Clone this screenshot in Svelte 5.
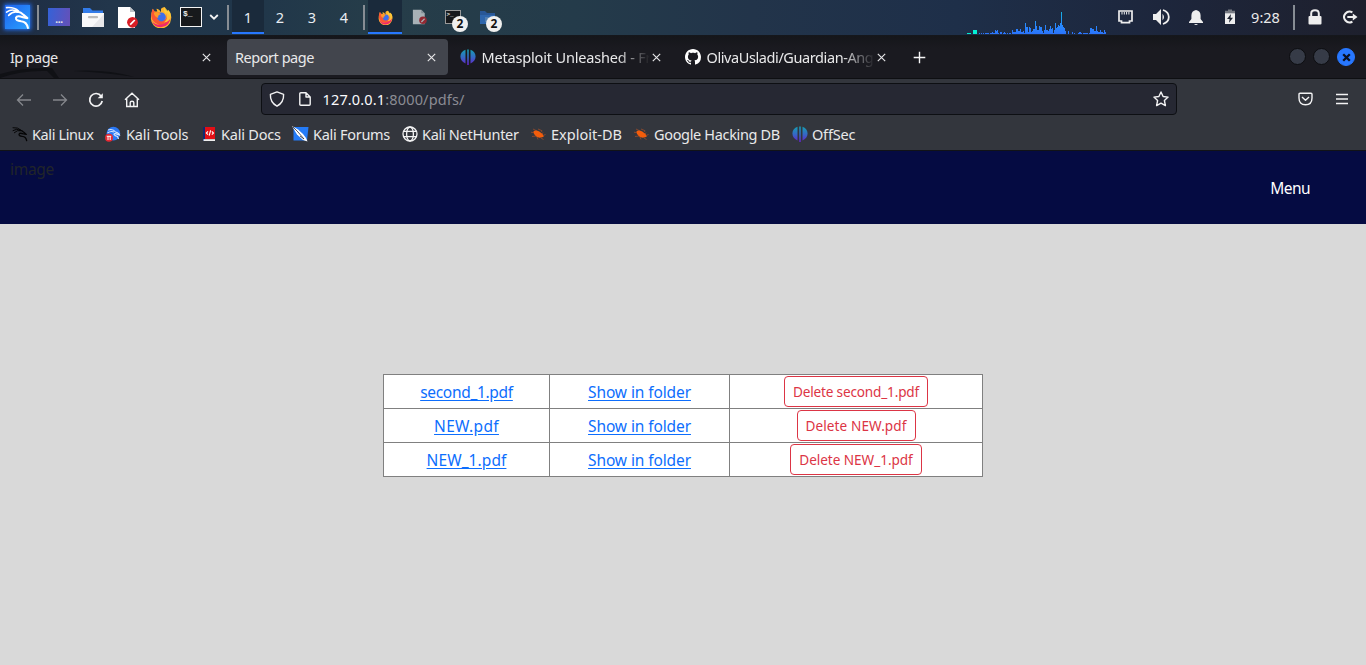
<script>
  const workspaces = [1, 2, 3, 4];
  const tabs = [
    { title: 'Ip page', width: 227, ls: -0.6 },
    { title: 'Report page', width: 221, ls: -0.46, active: true },
    { title: 'Metasploit Unleashed - Fr', width: 225, icon: 'offsec', ls: -0.17 },
    { title: 'OlivaUsladi/Guardian-Ang', width: 225, icon: 'github', ls: -0.41 }
  ];
  const bookmarks = [
    { label: 'Kali Linux', width: 93, icon: 'dragon', ls: -0.38, gap: 4 },
    { label: 'Kali Tools', width: 97, icon: 'tools', ls: -0.12, gap: 5 },
    { label: 'Kali Docs', width: 90, icon: 'docs', ls: -0.2, gap: 3 },
    { label: 'Kali Forums', width: 110, icon: 'forums', ls: -0.28, gap: 4 },
    { label: 'Kali NetHunter', width: 128, icon: 'globe', ls: -0.3, gap: 4 },
    { label: 'Exploit-DB', width: 103, icon: 'bug', ls: 0.02, gap: 5 },
    { label: 'Google Hacking DB', width: 159, icon: 'bug', ls: -0.34, gap: 5 },
    { label: 'OffSec', width: 70, icon: 'offsec', ls: -0.2, gap: 4 }
  ];
  const files = [
    { name: 'second_1.pdf', ls: -0.31, dls: -0.18, bw: 144 },
    { name: 'NEW.pdf', ls: 0.33, dls: 0.1, bw: 119 },
    { name: 'NEW_1.pdf', ls: 0.08, dls: -0.05, bw: 132 }
  ];
  const load = [
    1,0,1,0,1,0,1,1,1,1,0,1,1,2,1,1,4,3,4,1,0,2,2,0,1,2,1,0,1,0,1,1,0,4,2,2,2,5,5,3,3,5,2,2,3,1,11,7,7,2,7,6,2,3,5,5,13,8,4,4,8,7,7,3,1,4,9,4,4,3,5,8,5,6,1,4,
    11,6,7,9,8,11,22,9,7,6,3,0,0,3,0,0,0,2,0,1,0,0,0,1,2,2,1,0,1,1,1,1,1,0,1,6,6,5,5,3,3,8,3,2,2,4,2,2,1,4,2,0
  ];
</script>

{#snippet dragon(color, size)}
  <svg width={size} height={size} viewBox="0 0 24 24" fill="none" stroke={color} stroke-linecap="round" stroke-linejoin="round">
    <path d="M1.5 2.5Q9 1.8 13 5.8M1.5 6.8Q7 3 12.5 6.5M3.5 10Q8 5.5 12.5 7" stroke-width="1.5" />
    <path d="M11.5 6.3Q15.5 6.8 17.8 9.5L21.5 12.6L17.2 11.8Q11.5 9.8 10.6 12.2Q10 15 15.5 15.6Q20.8 16 22 22" stroke-width="2" />
  </svg>
{/snippet}

{#snippet firefox()}
  <svg class="ff" viewBox="0 0 24 24">
    <path d="M12 3Q14 1 16 1Q16 4 19 6L20 4Q24 9 23 14A11 11 0 0 1 1 13Q1 8 3 3L5 6L8 6L7 3Q10 3 12 7Z" fill="#ffb52d" />
    <path d="M1.3 10Q2 5 3 3L6 7L11 7Q8 9 9 13Q11 17 16 15Q20 12 17 6Q23 9 22 15A11 11 0 0 1 1.3 10Z" fill="#fa5535" />
    <path d="M2 16Q6 22 14 20Q20 18 22 13Q22 21 13 23Q5 24 2 16Z" fill="#ee276e" />
    <circle cx="12.5" cy="12" r="4.8" fill="#3f6ee9" />
    <path d="M4 7Q9 6 12 9Q8 10 9 13Q5 12 4 7Z" fill="#ff9b29" />
    <path d="M16 1Q14 6 18 9Q20 14 15 18Q23 17 22.8 10Q22 5 19 5Z" fill="#ffd13a" opacity=".85" />
  </svg>
{/snippet}

{#snippet textfile()}
  <svg class="tf" viewBox="0 0 21 23">
    <path d="M1 1H13L18 6V22H1Z" fill="#fff" /><path d="M13 1L18 6H13Z" fill="#bfc3c8" />
    <circle cx="15.5" cy="16.3" r="5.4" fill="#d91d25" /><path d="M13.2 18.7L17.8 14" stroke="#fff" stroke-width="1.7" />
  </svg>
{/snippet}

{#snippet mark(name)}
  {#if name === 'offsec'}
    <svg width="16" height="16" viewBox="0 0 16 16">
      <defs><linearGradient id="os" x2="0" y2="1"><stop offset="0" stop-color="#159fb2" /><stop offset=".5" stop-color="#3569c5" /><stop offset="1" stop-color="#6520c8" /></linearGradient></defs>
      <path d="M5.5 .8V14.5C2.5 13 .4 10.8 .4 7.5C.4 4.2 2.5 1.7 5.5 .8ZM7.2 .5H8.8V16H7.2ZM10.5 .8C13.5 1.7 15.6 4.2 15.6 7.5C15.6 10.8 13.5 13 10.5 14.5Z" fill="url(#os)" />
    </svg>
  {:else if name === 'github'}
    <svg width="16" height="16" viewBox="0 0 16 16"><path fill="#fff" d="M8 0C3.58 0 0 3.58 0 8c0 3.54 2.29 6.53 5.47 7.59.4.07.55-.17.55-.38 0-.19-.01-.82-.01-1.49-2.01.37-2.53-.49-2.69-.94-.09-.23-.48-.94-.82-1.13-.28-.15-.68-.52-.01-.53.63-.01 1.08.58 1.23.82.72 1.21 1.87.87 2.33.66.07-.52.28-.87.51-1.07-1.78-.2-3.64-.89-3.64-3.95 0-.87.31-1.59.82-2.15-.08-.2-.36-1.02.08-2.12 0 0 .67-.21 2.2.82.64-.18 1.32-.27 2-.27s1.36.09 2 .27c1.53-1.04 2.2-.82 2.2-.82.44 1.1.16 1.92.08 2.12.51.56.82 1.27.82 2.15 0 3.07-1.87 3.75-3.65 3.95.29.25.54.73.54 1.48 0 1.07-.01 1.93-.01 2.2 0 .21.15.46.55.38A8.01 8.01 0 0 0 16 8c0-4.42-3.58-8-8-8" /></svg>
  {:else if name === 'dragon'}
    {@render dragon('#050506', 16)}
  {:else if name === 'tools'}
    <svg width="16" height="16" viewBox="0 0 16 16">
      <circle cx="8.4" cy="7.6" r="6.8" fill="#2a78f5" />
      <path d="M3 4Q8 2.5 10.5 6Q14 7 14.5 9Q9 6.5 9 8.5Q10 10 12.5 10.5L13.5 13M2.5 7Q6 4.5 9 6" fill="none" stroke="#d8e7ff" stroke-width="1.1" />
      <circle cx="4" cy="11.8" r="4" fill="#e52933" /><path d="M1.8 10.3H6.2M3 10.5V14M5.2 10.5V14" stroke="#fff" stroke-width="1" />
    </svg>
  {:else if name === 'docs'}
    <svg width="16" height="16" viewBox="0 0 16 16">
      <path d="M2 1H13V13H2Z" fill="#e20f16" /><path d="M1 1H3V15H1Z" fill="#102a72" /><path d="M1.5 13.2H13V15H1.5Z" fill="#eee" />
      <path d="M6 5.3L4.3 7L6 8.7M9.8 5.3L11.5 7L9.8 8.7M8.6 4.3L7.2 9.7" fill="none" stroke="#fff" stroke-width="1.1" />
    </svg>
  {:else if name === 'forums'}
    <svg width="17" height="16" viewBox="0 0 17 16">
      <path d="M1.5 1H16.5L15 14.5H1.5Z" fill="#247bf7" /><path d="M0 0L6 3.5L11 8L14 12L15.5 15.5L11 14L5 8.5Z" fill="#fff" />
      <path d="M1 1L6 6L12 13M8 10L12 13" stroke="#30343d" stroke-width=".8" fill="none" />
    </svg>
  {:else if name === 'globe'}
    <svg width="16" height="16" viewBox="0 0 16 16" fill="none" stroke="#f3f3f4" stroke-width="1.3"><circle cx="8" cy="8" r="7" /><ellipse cx="8" cy="8" rx="3.4" ry="7" /><path d="M1.7 5.3H14.3M1.7 10.7H14.3" /></svg>
  {:else if name === 'bug'}
    <svg width="16" height="16" viewBox="0 0 16 16">
      <path d="M1 6.2L5 7M3 3L7 5M2 10.5L6 10M8 3L12 4.7L11.5 6M13 6.5L12 8M13 9.5L15.5 8.5M11 12L13.5 13.5M7 11L8 13.5" fill="none" stroke="#8f4a2c" stroke-width=".9" />
      <path d="M3.4 5.4Q5.5 3.8 9.3 5.5Q12.8 7.3 13.8 10.8L12 11.3Q9 12.4 6.2 10.6Q3.6 8.8 3.4 5.4Z" fill="#f45d0b" />
    </svg>
  {/if}
{/snippet}

<header class="panel">
  <div class="cell kali"><span class="logo">{@render dragon('#fff', 25)}</span></div>
  <div class="cell sep"><i></i></div>
  <div class="cell launcher"><span class="desktop">...</span></div>
  <div class="cell launcher">
    <svg width="22" height="20" viewBox="0 0 22 20"><path d="M1 1H8L10.5 3.5H21V8H1Z" fill="#327be9" /><path d="M0 6H22V20H0Z" fill="#f8f8f9" /><path d="M22 7V20H10Z" fill="#e7e7ea" /><path d="M7 10.2H15" stroke="#bbb" stroke-width="2.2" stroke-linecap="round" /></svg>
  </div>
  <div class="cell launcher doc">{@render textfile()}</div>
  <div class="cell launcher">{@render firefox()}</div>
  <div class="cell term"><span class="terminal">$_</span></div>
  <div class="cell chev"><svg width="10" height="8" viewBox="0 0 10 8"><path d="M1.2 2L5 5.7L8.8 2" fill="none" stroke="#f3f3f3" stroke-width="1.8" /></svg></div>
  <div class="cell sep"><i></i></div>
  {#each workspaces as n}
    <div class="cell ws" class:on={n === 1}>{n}</div>
  {/each}
  <div class="cell sep"><i></i></div>
  <div class="cell launcher on small">{@render firefox()}</div>
  <div class="cell launcher small dim">{@render textfile()}</div>
  <div class="cell launcher"><span class="terminal mini">&gt;_</span><b class="badge">2</b></div>
  <div class="cell launcher">
    <svg width="15" height="13" viewBox="0 0 15 13"><path d="M0 0H5L7 2H15V13H0Z" fill="#285796" /><path d="M0 4H15V13H0Z" fill="#2e66ac" /><path d="M5 6H10V11H5Z" fill="#517eaf" /></svg>
    <b class="badge">2</b>
  </div>
  <div class="grow"></div>
  <svg class="graph" width="141" height="24" viewBox="0 0 141 24" shape-rendering="crispEdges">
    <defs><linearGradient id="gr" x2="0" y2="24" gradientUnits="userSpaceOnUse"><stop offset="0" stop-color="#12b8e0" /><stop offset=".6" stop-color="#278cff" /><stop offset="1" stop-color="#2b73fa" /></linearGradient></defs>
    <rect x="0" y="23" width="4" height="1" fill="#04ecd0" /><rect x="6" y="20" width="4" height="4" fill="#04f1d6" />
    {#each load as h, i}<rect x={12 + i} y={24 - h} width="1" height={h} fill="url(#gr)" />{/each}
  </svg>
  <div class="cell tray"><svg width="15" height="14" viewBox="0 0 15 14"><path d="M1 1H14V11H11.5V12.7H3.5V11H1Z" fill="none" stroke="#eee" stroke-width="1.7" /><path d="M4 2V4.5M6.3 2V4.5M8.6 2V4.5M10.9 2V4.5" stroke="#eee" stroke-width="1" /></svg></div>
  <div class="cell tray"><svg width="18" height="18" viewBox="0 0 18 18"><path d="M1 6H4L9 1V17L4 12H1Z" fill="#eee" /><path d="M10.5 5.7Q13.5 9 10.5 12.3" fill="#eee" /><path d="M11 2Q16.8 4 16.8 9Q16.8 14 11 16" fill="none" stroke="#eee" stroke-width="1.8" /></svg></div>
  <div class="cell tray"><svg width="16" height="17" viewBox="0 0 16 17"><path d="M8 1Q12.6 1.8 12.6 6.5V10L15 13V14H1V13L3.4 10V6.5Q3.4 1.8 8 1ZM6 15H10Q8 17 6 15Z" fill="#eee" /></svg></div>
  <div class="cell tray bat"><svg width="12" height="16" viewBox="0 0 12 16"><path d="M1 3V1.8H4V.5H8V1.8H11V4.2H1Z" fill="#777b83" /><path d="M1 4.2H11V15H1Z" fill="#eee" /><path d="M7 5L3 10H5.6L5 13.7L9 8.7H6.5Z" fill="#1e2432" /></svg></div>
  <div class="cell clock">9:28</div>
  <div class="cell sep"><i></i></div>
  <div class="cell launcher"><svg width="14" height="16" viewBox="0 0 14 16"><path d="M3.2 7V4.5Q3.2 1.2 7 1.2Q10.8 1.2 10.8 4.5V7" fill="none" stroke="#eee" stroke-width="2" /><rect x=".5" y="7" width="13" height="8.5" rx="1" fill="#eee" /></svg></div>
  <div class="cell launcher exit"><svg width="16" height="14" viewBox="0 0 16 14"><path d="M10.4 2.4A5.4 5.4 0 1 0 10.4 11.6" fill="none" stroke="#eee" stroke-width="2" /><path d="M5.3 6H10.8V3.4L15.5 7L10.8 10.6V8H5.3Z" fill="#eee" /></svg></div>
</header>

<nav class="tabs">
  <svg class="trace" width="140" height="13" viewBox="0 0 140 13"><path d="M0 9Q22 2 52 3L59 13H54L47 6Q22 5 0 13Z" fill="#101115" /><path d="M73 6Q105 4 135 12Q100 7 73 6Z" fill="#101115" /></svg>
  {#each tabs as t, i}
    <div style:width="{t.width}px">
      <div class="tab" class:active={t.active} class:withicon={t.icon} class:first={i === 0}>
        {#if t.icon}{@render mark(t.icon)}{/if}
        <span class="title" class:fade={t.icon} style:letter-spacing="{t.ls}px">{t.title}</span>
        <svg width="9" height="9" viewBox="0 0 9 9"><path d="M.8 .8L8.2 8.2M8.2 .8L.8 8.2" stroke="#e6e6e8" stroke-width="1.15" /></svg>
      </div>
    </div>
  {/each}
  <svg class="plus" width="13" height="13" viewBox="0 0 13 13"><path d="M6.5 .7V12.3M.7 6.5H12.3" stroke="#f5f5f6" stroke-width="1.4" /></svg>
  <div class="grow"></div>
  <div class="win"><i></i><i></i><i class="close"><svg width="9" height="9" viewBox="0 0 9 9"><path d="M1.2 1.2L7.8 7.8M7.8 1.2L1.2 7.8" stroke="#0b1020" stroke-width="2.3" /></svg></i></div>
</nav>

<section class="chrome">
  <div class="toolbar">
    <div class="nav">
      <svg viewBox="0 0 16 16" class="off"><path d="M15 8H1.5M7 2.5L1.5 8L7 13.5" /></svg>
      <svg viewBox="0 0 16 16" class="off"><path d="M1 8H14.5M9 2.5L14.5 8L9 13.5" /></svg>
      <svg viewBox="0 0 16 16"><path d="M13.2 4.2A6.3 6.3 0 1 0 14.2 9" stroke-width="1.7" /><path d="M14.8 1.2V6.3H9.7Z" fill="#f3f3f4" stroke="none" /></svg>
      <svg viewBox="0 0 16 16"><path d="M1 7.7L8 1.2L15 7.7M2.7 6.8V14.5H13.3V6.8M6.2 14.2V10.5Q6.2 9.3 8 9.3Q9.8 9.3 9.8 10.5V14.2" stroke-width="1.4" /></svg>
    </div>
    <div class="url">
      <svg width="16" height="16" viewBox="0 0 16 16"><path d="M8 .9L14.6 3.3Q15 11.5 8 15.2Q1 11.5 1.4 3.3Z" /></svg>
      <svg class="page" width="12" height="14" viewBox="0 0 12 14"><path d="M.8 1.8Q.8 .8 1.8 .8H7L11.2 5V12.2Q11.2 13.2 10.2 13.2H1.8Q.8 13.2 .8 12.2ZM7 .8V5H11.2" /></svg>
      <span class="addr">127.0.0.1<em>:8000/pdfs/</em></span>
      <svg width="16" height="16" viewBox="0 0 16 16"><path d="M8 1L10.1 5.5L15.1 6.1L11.4 9.5L12.4 14.6L8 12.1L3.6 14.6L4.6 9.5L.9 6.1L5.9 5.5Z" /></svg>
    </div>
    <div class="end">
      <svg width="15" height="14" viewBox="0 0 15 14"><path d="M2 1.2H13Q14 1.2 14 2.2V6Q14 12.7 7.5 12.7Q1 12.7 1 6V2.2Q1 1.2 2 1.2ZM4 5L7.5 8.3L11 5" /></svg>
      <svg width="12" height="12" viewBox="0 0 12 12"><path d="M0 1.5H12M0 6H12M0 10.5H12" /></svg>
    </div>
  </div>
  <div class="bookmarks">
    {#each bookmarks as b}
      <div class="bm" style:width="{b.width}px" style:gap="{b.gap}px" style:letter-spacing="{b.ls}px">{@render mark(b.icon)}<span>{b.label}</span></div>
    {/each}
  </div>
</section>

<main>
  <div class="bar">
    <span class="image">image</span>
    <span class="menu">Menu</span>
  </div>
  <table>
    <colgroup><col style="width:166px" /><col style="width:180px" /><col style="width:253px" /></colgroup>
    <tbody>
      {#each files as f}
        <tr>
          <td><a href="#file" style:letter-spacing="{f.ls}px">{f.name}</a></td>
          <td><a href="#folder">Show in folder</a></td>
          <td><button style:letter-spacing="{f.dls}px" style:width="{f.bw}px">Delete {f.name}</button></td>
        </tr>
      {/each}
    </tbody>
  </table>
</main>

<style>
  :global(body) { margin: 0; background: #d9d9d9; overflow: hidden; }
  :global(#app) { font: 14.5px "Noto Sans", sans-serif; color: #e9e9ea; }
  * { box-sizing: border-box; }
  svg { display: block; flex: none; }
  .grow { flex: 1; }

  .panel { display: flex; height: 36px; padding-bottom: 1px; background: linear-gradient(90deg, #1e2c43 0, #22364b 8%, #20364a 18%, #263d49 28%, #243b4a 42%, #22344a 55%, #1e2f49 70%, #1d263c 85%, #1e202d 100%); border-bottom: 1px solid #15171c; }
  .cell { position: relative; display: flex; align-items: center; justify-content: center; flex: none; height: 34px; }
  .kali { width: 34px; padding-bottom: 1px; }
  .logo { display: grid; width: 25px; height: 24px; background: linear-gradient(135deg, #1e62ee, #2ba2ff); box-shadow: 0 0 4px 1px #216cef; }
  .sep { width: 8px; }
  .sep i { width: 2px; height: 25px; background: #878d94; }
  .launcher { width: 34px; }
  .desktop { width: 22px; height: 18px; background: linear-gradient(100deg, #3462d8, #6650b8); font: bold 10px/23px "Noto Sans", sans-serif; text-align: center; letter-spacing: -.3px; }
  .ff { width: 22px; height: 22px; }
  .tf { width: 21px; height: 23px; }
  .term { width: 26px; }
  .terminal { width: 22px; height: 20px; background: #17191c; border: 1px solid #f5f5f5; font: bold 8px/11px "Liberation Mono", monospace; padding-left: 2px; }
  .mini { width: 16px; height: 14px; margin-right: 1px; border-color: #999; font-size: 6px; line-height: 8px; padding-left: 1px; }
  .chev { width: 20px; }
  .ws { width: 32px; color: #e8edf2; padding-bottom: 1px; }
  .on::after { content: ""; position: absolute; inset: auto 0 0; height: 2px; background: #2777ff; }
  .on { background: #1a2a3b; }
  .small .ff { width: 15px; height: 15px; }
  .small .tf { width: 15px; height: 16px; }
  .dim { opacity: .6; }
  .badge { position: absolute; left: 16px; top: 16px; width: 16px; height: 16px; border-radius: 50%; background: #f0f0ef; color: #111; font: bold 12px/16px "Noto Sans", sans-serif; text-align: center; }
  .graph { margin-top: 10px; }
  .tray { width: 35px; }
  .bat { width: 34px; }
  .clock { width: 43px; padding: 0 6px 1px 0; }
  .exit { justify-content: flex-end; padding-right: 8px; }

  .tabs { position: relative; display: flex; align-items: center; height: 43px; background: linear-gradient(#15161a, #1a1a20 30%); border-bottom: 1px solid #0e0f12; }
  .trace { position: absolute; left: 0; bottom: 0; }
  .tab { position: relative; display: flex; align-items: center; height: 36px; padding: 0 12px 0 8px; border-radius: 4px; }
  .first { padding-left: 10px; padding-right: 16px; }
  .active { background: #42454d; }
  .withicon { padding: 0 12px 0 12px; gap: 6px; }
  .title { flex: 1; white-space: nowrap; line-height: 24px; }
  .fade { margin: 0 -5px 0 -.5px; -webkit-mask-image: linear-gradient(90deg, #000 calc(100% - 34px), transparent calc(100% - 1px)); mask-image: linear-gradient(90deg, #000 calc(100% - 34px), transparent calc(100% - 1px)); }
  .plus { margin-left: 15px; }
  .win { display: flex; gap: 7px; padding-right: 11px; }
  .win i { display: grid; place-items: center; width: 17px; height: 17px; border-radius: 50%; background: #363b47; border: 1px solid #0c0d10; }
  .win .close { background: #2777ff; border-color: #2777ff; width: 18px; height: 18px; }

  .chrome { height: 72px; background: #33363d; border-bottom: 1px solid #111317; }
  .toolbar { display: flex; align-items: center; height: 40px; padding-right: 18px; }
  .nav { display: flex; gap: 20px; width: 261px; padding: 1px 0 0 16px; }
  .nav svg { width: 16px; height: 16px; fill: none; stroke: #f3f3f4; stroke-width: 1.3; }
  .nav svg:last-child { margin-left: -.5px; }
  .nav .off { stroke: #85878c; }
  .url { display: flex; align-items: center; width: 916px; height: 32px; padding: 0 7px; background: #262833; border: 1px solid #0d0f13; border-radius: 4px; }
  .url svg, .end svg { fill: none; stroke: #f3f3f4; stroke-width: 1.4; stroke-linejoin: round; }
  .page { margin: 0 11.5px 0 14px; }
  .addr { flex: 1; letter-spacing: .15px; color: #fbfbfe; }
  .addr em { font-style: normal; color: #8b8c94; }
  .end { display: flex; align-items: center; justify-content: flex-end; gap: 23px; flex: 1; }
  .bookmarks { display: flex; height: 31px; padding: 0 0 2px 12px; }
  .bm { display: flex; align-items: center; white-space: nowrap; flex: none; }

  main { font-size: 15.5px; color: #212529; }
  .bar { display: flex; justify-content: space-between; height: 73px; padding: 6px 56px 0 10px; background: #050b42; }
  .image { line-height: 24px; letter-spacing: -.3px; }
  .menu { line-height: 24px; padding-top: 19px; letter-spacing: -.55px; color: #fff; }
  table { width: 600px; margin: 150px auto 0; table-layout: fixed; border-collapse: collapse; background: #fff; border: 1px solid #808080; }
  td { height: 34px; padding: 0; border: 1px solid #808080; text-align: center; vertical-align: middle; line-height: 24px; }
  a { color: #0d6efd; letter-spacing: -.1px; text-decoration: underline; text-underline-offset: 2px; }
  button { display: block; margin: 0 auto; height: 31px; padding: 0; background: #fff; border: 1px solid #dc3545; border-radius: 4px; color: #dc3545; font: 13.6px "Noto Sans", sans-serif; white-space: nowrap; }
</style>
